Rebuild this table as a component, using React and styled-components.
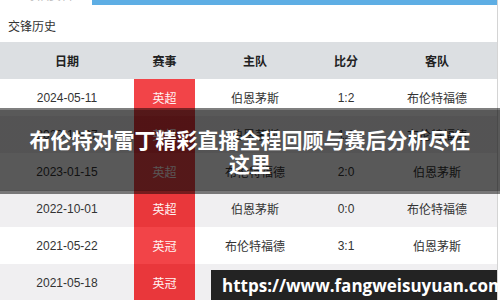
import React from 'react'
import styled, { createGlobalStyle } from 'styled-components'

const GlobalStyle = createGlobalStyle`
  html, body {
    margin: 0;
    padding: 0;
    background: #ffffff;
    overflow: hidden;
  }
`

const Page = styled.div`
  position: relative;
  width: 500px;
  height: 300px;
  overflow: hidden;
  background: #ffffff;
  font-family: "Liberation Sans", "Noto Sans CJK SC", sans-serif;
`

const Frame = styled.div`
  width: 497px;
  height: 300px;
  border-right: 1px solid #d4d4d4;
`

const TopStrip = styled.div`
  display: flex;
  height: 5px;
`

const TabStub = styled.div`
  width: 92px;
  overflow: hidden;
  background: #ffffff;
`

const TabLabel = styled.span`
  display: block;
  margin-top: -10px;
  padding-left: 25px;
  font-size: 12px;
  line-height: 12px;
  color: #b8b8b8;
`

const BlueBar = styled.div`
  flex: 1;
  background: #5eaee4;
`

const SectionTitle = styled.div`
  height: 37px;
  display: flex;
  align-items: center;
  padding: 3px 0 0 8px;
  box-sizing: border-box;
  font-size: 12px;
  color: #333333;
`

const Table = styled.div`
  display: grid;
  grid-template-columns: 134px 61px 120px 62px 120px;
  grid-auto-rows: 37px;
`

const HeadCell = styled.div`
  display: flex;
  align-items: center;
  justify-content: center;
  background: #dcdfe2;
  font-size: 12px;
  font-weight: bold;
  color: #222222;
`

const Cell = styled.div`
  display: flex;
  align-items: center;
  justify-content: center;
  font-size: 12px;
  color: ${p => (p.$league ? '#fff3f3' : '#333333')};
  background: ${p =>
    p.$league ? (p.$alt ? '#e9373b' : '#f24448') : p.$alt ? '#f0eff1' : '#ffffff'};
`

const Banner = styled.div`
  position: absolute;
  left: 0;
  top: 108px;
  width: 500px;
  height: 86px;
  display: flex;
  align-items: center;
  justify-content: center;
  padding: 0 25px;
  box-sizing: border-box;
  background: linear-gradient(
    to bottom,
    rgba(0, 0, 0, 0.5) 0,
    rgba(0, 0, 0, 0.5) 2px,
    rgba(0, 0, 0, 0.65) 2px,
    rgba(0, 0, 0, 0.65) calc(100% - 3px),
    rgba(0, 0, 0, 0.5) calc(100% - 3px)
  );
`

const BannerText = styled.h1`
  margin: 0;
  font-family: "Noto Sans CJK SC", sans-serif;
  font-size: 21px;
  line-height: 24px;
  font-weight: bold;
  color: #ffffff;
  text-align: center;
`

const Watermark = styled.div`
  position: absolute;
  left: 211px;
  top: 270px;
  width: 286px;
  height: 30px;
  display: flex;
  align-items: center;
  padding-left: 11px;
  box-sizing: border-box;
  background: #232323;
  font-family: "Open Sans", "DejaVu Sans", sans-serif;
  font-weight: bold;
  font-size: 17px;
  color: #ffffff;
`

const headers = ['日期', '赛事', '主队', '比分', '客队']

const matches = [
  { date: '2024-05-11', league: '英超', home: '伯恩茅斯', score: '1:2', away: '布伦特福德' },
  { date: '2023-10-07', league: '英超', home: '伯恩茅斯', score: '1:1', away: '布伦特福德' },
  { date: '2023-01-15', league: '英超', home: '布伦特福德', score: '2:0', away: '伯恩茅斯' },
  { date: '2022-10-01', league: '英超', home: '伯恩茅斯', score: '0:0', away: '布伦特福德' },
  { date: '2021-05-22', league: '英冠', home: '布伦特福德', score: '3:1', away: '伯恩茅斯' },
  { date: '2021-05-18', league: '英冠', home: '伯恩茅斯', score: '1:0', away: '布伦特福德' }
]

const App = () => {
  return (
    <Page>
      <GlobalStyle />
      <Frame>
        <TopStrip>
          <TabStub>
            <TabLabel>球队资料</TabLabel>
          </TabStub>
          <BlueBar />
        </TopStrip>
        <SectionTitle>交锋历史</SectionTitle>
        <Table>
          {headers.map(h => <HeadCell key={h}>{h}</HeadCell>)}
          {matches.map((m, i) => {
            const alt = i % 2 === 1
            return (
              <React.Fragment key={m.date}>
                <Cell $alt={alt}>{m.date}</Cell>
                <Cell $alt={alt} $league>{m.league}</Cell>
                <Cell $alt={alt}>{m.home}</Cell>
                <Cell $alt={alt}>{m.score}</Cell>
                <Cell $alt={alt}>{m.away}</Cell>
              </React.Fragment>
            )
          })}
        </Table>
      </Frame>
      <Banner>
        <BannerText>布伦特对雷丁精彩直播全程回顾与赛后分析尽在这里</BannerText>
      </Banner>
      <Watermark>https://www.fangweisuyuan.com</Watermark>
    </Page>
  )
}

export default App
